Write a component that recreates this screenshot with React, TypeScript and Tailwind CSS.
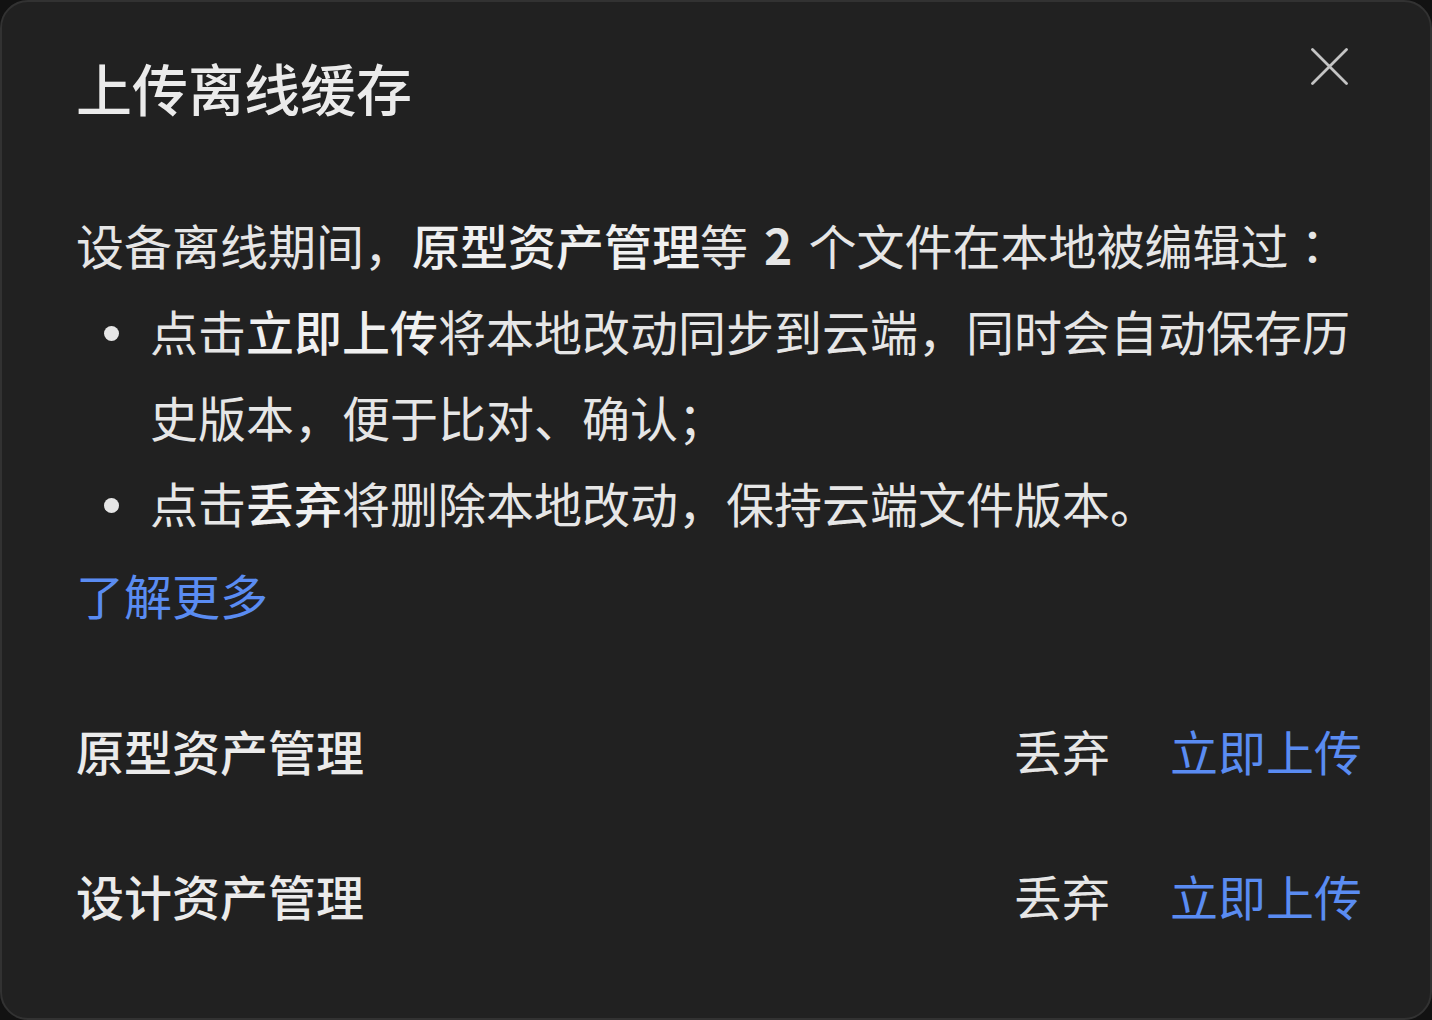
import { useState } from "react";

type PendingFile = {
  id: string;
  name: string;
};

const files: PendingFile[] = [
  { id: "proto", name: "原型资产管理" },
  { id: "design", name: "设计资产管理" },
];

function CloseIcon() {
  return (
    <svg width="37" height="37" viewBox="0 0 37 37" fill="none">
      <path d="M1.5 1.5L35.5 35.5M35.5 1.5L1.5 35.5" stroke="#c4c4c4" strokeWidth="2.8" strokeLinecap="round" />
    </svg>
  );
}

function Bullet({ children }: { children: React.ReactNode }) {
  return (
    <li className="flex">
      <div className="flex h-[86px] w-[74px] shrink-0 items-center pl-[28px] pt-[6px]">
        <span className="block size-[15px] shrink-0 rounded-full bg-[#e6e6e6]" />
      </div>
      <p className="flex-1">{children}</p>
    </li>
  );
}

export default function App() {
  const [rows, setRows] = useState(files);

  // both actions just drop the row from the list for now
  const resolve = (id: string) => setRows((r) => r.filter((f) => f.id !== id));

  return (
    <div className="min-h-screen w-full bg-[#121212] font-['Noto_Sans_CJK_SC','Noto_Sans',sans-serif]">
      <div className="h-[1020px] w-full overflow-hidden rounded-[28px] border-2 border-[#323232] bg-[#212121] pl-[74px] pr-[68px] text-[#e6e6e6]">
        <div className="flex items-start justify-between pt-[46px]">
          <h1 className="text-[56px] font-medium leading-[78px] text-[#ebebeb]">上传离线缓存</h1>
          <button className="mr-[14px]">
            <CloseIcon />
          </button>
        </div>

        <div className="mt-[75px] text-[48px] leading-[86px]">
          <p>
            设备离线期间，<span className="font-medium text-[#f0f0f0]">原型资产管理</span>等
            <span className="px-[16px] font-semibold">2</span>个文件在本地被编辑过
            <span className="font-['Noto_Sans_CJK_TC',sans-serif]">：</span>
          </p>
          <ul>
            <Bullet>
              点击<span className="font-medium text-[#f0f0f0]">立即上传</span>将本地改动同步到云端，同时会自动保存历史版本，便于比对、确认；
            </Bullet>
            <Bullet>
              点击<span className="font-medium text-[#f0f0f0]">丢弃</span>将删除本地改动，保持云端文件版本。
            </Bullet>
          </ul>
          <a href="#" className="mt-[6px] block w-fit text-[#5a8cf2]">
            了解更多
          </a>
        </div>

        <div className="mt-[40px]">
          {rows.map((f) => (
            <div key={f.id} className="flex h-[145px] items-center justify-between text-[48px]">
              <span className="font-medium text-[#ebebeb]">{f.name}</span>
              <div className="flex items-center gap-[60px]">
                <button className="text-[#e6e6e6]" onClick={() => resolve(f.id)}>
                  丢弃
                </button>
                <button className="text-[#5a8cf2]" onClick={() => resolve(f.id)}>
                  立即上传
                </button>
              </div>
            </div>
          ))}
        </div>
      </div>
    </div>
  );
}
